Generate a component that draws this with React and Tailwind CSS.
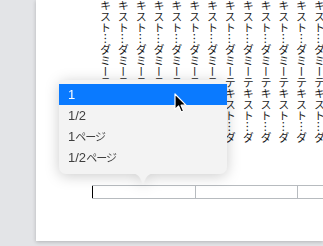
import React from "react";

const cols = Array.from({ length: 13 });
const items = [
  ["1", ""],
  ["1/2", ""],
  ["1", "ページ"],
  ["1/2", "ページ"],
];

export default function App() {
  return (
    <div className="relative w-[323px] h-[246px] overflow-hidden bg-[#e3e4e7]" style={{ fontFamily: '"Liberation Sans", "Noto Sans CJK JP", sans-serif' }}>
      <div className="ml-[36px] h-[241px] bg-white shadow-[0_1px_4px_rgba(0,0,0,0.22)] flex flex-col">
        <div className="flex gap-[6.83px] pl-[63.5px] h-[143px]">
          {cols.map((_, i) => (
            <div
              key={i}
              className="w-[11px] text-[11px] leading-[11px] text-[#1c1c1c] [writing-mode:vertical-rl] whitespace-nowrap"
              style={{ fontFamily: '"Noto Sans CJK JP", sans-serif' }}
            >
              キスト…ダミーテキスト…ダ
            </div>
          ))}
        </div>
        <div className="mt-[42px] ml-[56px] flex h-[14px] border-y border-[#b7bbbf]">
          <div className="w-[104px] shrink-0 border-l border-l-black border-r border-r-[#b7bbbf]" />
          <div className="w-[102px] shrink-0 border-r border-[#b7bbbf]" />
          <div className="flex-1" />
        </div>
      </div>

      <div className="absolute left-[59px] top-[80px] w-[168px] [filter:drop-shadow(0_2px_7px_rgba(0,0,0,0.2))]">
        <div className="rounded-[7px] bg-[#f3f3f3] pt-[4px] pb-[6px] h-[94px]">
          {items.map(([a, b], i) => (
            <div
              key={i}
              className={
                "h-[21px] flex items-center pl-[9px] text-[13px] " +
                (i === 0 ? "bg-[#0a7aff] text-white" : "text-[#3f3f3f]")
              }
            >
              <span>{a}</span>
              {b && (
                <span
                  className="text-[11px] tracking-[-1px] [font-feature-settings:'palt']"
                  style={{ fontFamily: '"Noto Sans CJK JP", sans-serif' }}
                >
                  {b}
                </span>
              )}
            </div>
          ))}
        </div>
        <svg className="absolute left-[71px] top-[93px]" width="26" height="12" viewBox="0 0 26 12">
          <path d="M0 0 Q7 0 10 5 L13 11.5 L16 5 Q19 0 26 0 Z" fill="#f3f3f3" />
        </svg>
      </div>

      <svg className="absolute left-[173px] top-[93px]" width="14" height="21" viewBox="0 0 14 21">
        <path
          d="M2 1 L2 16.5 L5.6 13 L8.2 19 L10.6 18 L8.1 12.2 L13 12.2 Z"
          fill="#000"
          stroke="#fff"
          strokeWidth="1.2"
          strokeLinejoin="round"
        />
      </svg>
    </div>
  );
}
